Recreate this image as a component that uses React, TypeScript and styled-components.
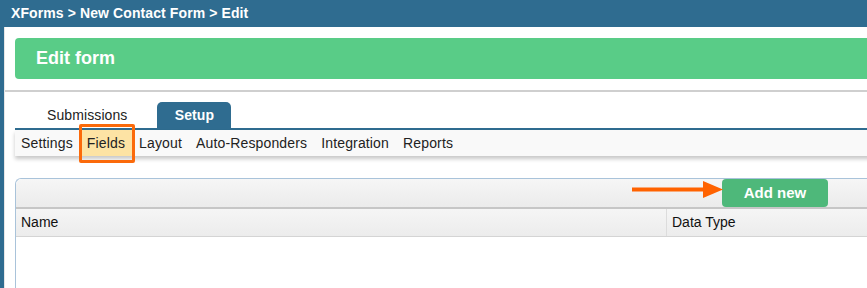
import styled, { createGlobalStyle } from "styled-components";

const GlobalStyle = createGlobalStyle`
  body {
    margin: 0;
    overflow: hidden;
    font-family: "Liberation Sans", Arial, sans-serif;
    background: #fff;
  }
`;

const subTabs = ["Settings", "Fields", "Layout", "Auto-Responders", "Integration", "Reports"];

export default function App() {
  return (
    <Page>
      <GlobalStyle />
      <TopBar>XForms &gt; New Contact Form &gt; Edit</TopBar>
      <Content>
        <BannerWrap>
          <Banner>Edit form</Banner>
        </BannerWrap>
        <Tabs>
          <Tab>Submissions</Tab>
          <Tab active>Setup</Tab>
        </Tabs>
        <SubNav>
          {subTabs.map(name => (
            <SubItem key={name} active={name === "Fields"}>{name}</SubItem>
          ))}
        </SubNav>
        <Panel>
          <PanelHeader>
            <AddButton>
              <Arrow width="91" height="17" viewBox="0 0 91 17">
                <rect x="0" y="6.5" width="73" height="4" fill="#ff6200" />
                <polygon points="71,0 91,8.5 71,17" fill="#ff6200" />
              </Arrow>
              Add new
            </AddButton>
          </PanelHeader>
          <TableHead>
            <HeadCell width={651}>Name</HeadCell>
            <HeadCell>Data Type</HeadCell>
          </TableHead>
          <TableBody />
        </Panel>
      </Content>
    </Page>
  );
}

const Page = styled.div`
  width: 940px;
  height: 288px;
  display: flex;
  flex-direction: column;
  background: #2f6c90;
`;

const TopBar = styled.div`
  height: 27px;
  line-height: 27px;
  padding-left: 11px;
  color: #fff;
  font-weight: bold;
  font-size: 14px;
  letter-spacing: 0.1px;
`;

const Content = styled.div`
  flex: 1;
  margin-left: 4px;
  background: #fff;
  border-left: 1px solid #e6e6e6;
  display: flex;
  flex-direction: column;
`;

const BannerWrap = styled.div`
  padding: 11px 0 11px 10px;
  border-bottom: 2px solid #cfcfcf;
`;

const Banner = styled.div`
  height: 41px;
  line-height: 41px;
  padding-left: 21px;
  background: #59cc87;
  border-radius: 4px 0 0 4px;
  color: #fff;
  font-weight: bold;
  font-size: 18px;
`;

const Tabs = styled.div`
  display: flex;
  align-items: flex-end;
  gap: 14px;
  margin: 10px 0 0 10px;
  padding-left: 16px;
  border-bottom: 2px solid #2f6c90;
`;

const Tab = styled.div<{ active?: boolean }>`
  height: 26px;
  line-height: 26px;
  padding: 0 16px;
  font-size: 14px;
  letter-spacing: 0.1px;
  border-radius: 5px 5px 0 0;
  color: ${p => (p.active ? "#fff" : "#222")};
  background: ${p => (p.active ? "#2f6c90" : "transparent")};
  font-weight: ${p => (p.active ? "bold" : "normal")};
  min-width: ${p => (p.active ? "42px" : "0")};
  text-align: center;
`;

const SubNav = styled.div`
  display: flex;
  height: 26px;
  margin-left: 10px;
  background: #f9f9f9;
  box-shadow: 0 3px 4px rgba(0, 0, 0, 0.22);
  position: relative;
  z-index: 1;
`;

const SubItem = styled.div<{ active?: boolean }>`
  position: relative;
  padding: 0 7px;
  line-height: 27px;
  font-size: 14px;
  letter-spacing: 0.15px;
  color: #222;
  background: ${p => (p.active ? "#fde3a4" : "transparent")};

  &:first-child {
    margin-left: -1px;
  }

  ${p =>
    p.active &&
    `
    &::after {
      content: "";
      position: absolute;
      top: -6px;
      bottom: -7px;
      left: -1px;
      right: -3px;
      border: 3px solid #fb6a0b;
      border-radius: 2px;
    }
  `}
`;

const Panel = styled.div`
  margin: 22px 0 0 10px;
  flex: 1;
  border: 1px solid #a9c3da;
  border-right: none;
  border-bottom: none;
  border-radius: 6px 0 0 0;
  display: flex;
  flex-direction: column;
`;

const PanelHeader = styled.div`
  height: 28px;
  display: flex;
  justify-content: flex-end;
  padding-right: 112px;
  background: linear-gradient(#f6f6f6, #ebebeb);
  border-radius: 6px 0 0 0;
  border-bottom: 2px solid #c6c6c6;
`;

const AddButton = styled.div`
  position: relative;
  width: 106px;
  height: 28px;
  line-height: 28px;
  text-align: center;
  background: #4eb87a;
  border-radius: 4px;
  color: #fff;
  font-weight: bold;
  font-size: 15px;
`;

const Arrow = styled.svg`
  position: absolute;
  right: 100%;
  top: 2px;
  margin-right: -1px;
`;

const TableHead = styled.div`
  display: flex;
  height: 27px;
  background: linear-gradient(#f5f5f5, #ececec);
  border-bottom: 1px solid #d4d4d4;
`;

const HeadCell = styled.div<{ width?: number }>`
  ${p => (p.width ? `width: ${p.width}px;` : "flex: 1;")}
  padding-left: 5px;
  line-height: 27px;
  font-size: 14px;
  color: #111;
  box-sizing: border-box;
  border-right: ${p => (p.width ? "1px solid #dcdcdc" : "none")};
`;

const TableBody = styled.div`
  flex: 1;
  background: #fff;
`;
